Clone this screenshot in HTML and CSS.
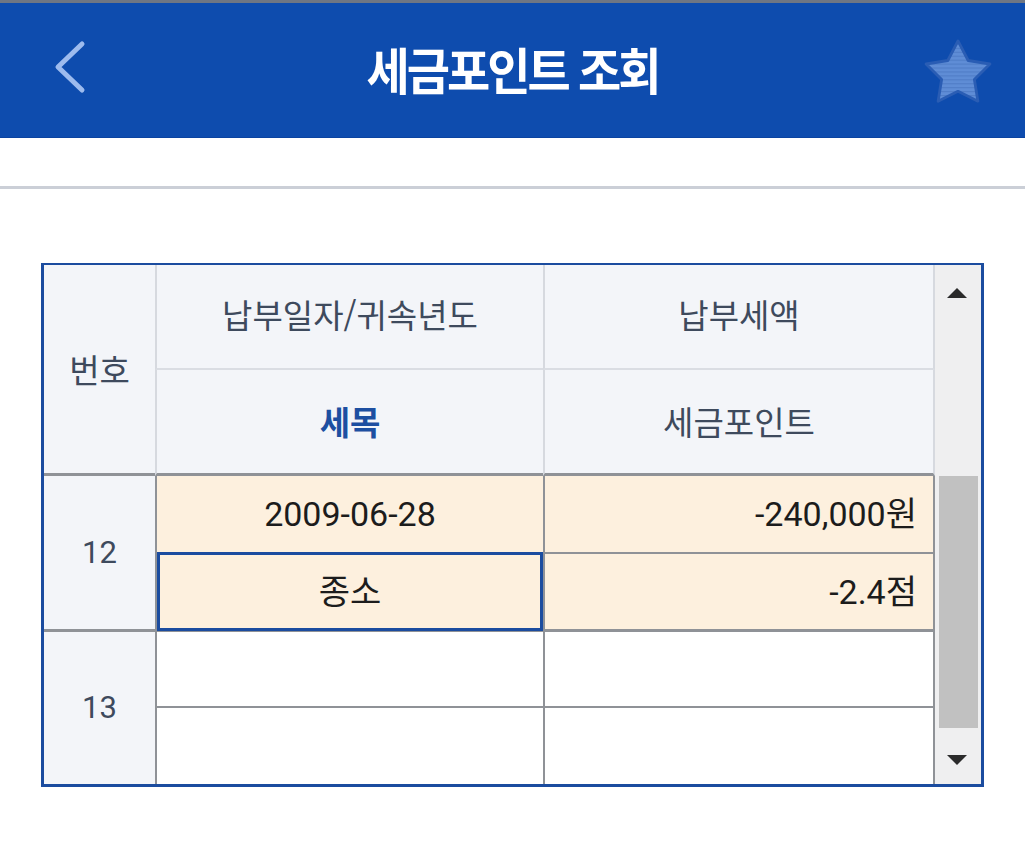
FILE: index.html
```html
<!DOCTYPE html>
<html lang="ko">
<head>
<meta charset="utf-8">
<title>세금포인트 조회</title>
<link rel="stylesheet" href="styles.css">
</head>
<body>
<div class="topstrip"></div>
<header class="appbar">
  <div class="side side-left">
    <svg class="back" width="40" height="60" viewBox="0 0 40 60" aria-label="뒤로">
      <polyline points="32,5 8,28 32,51" fill="none" stroke="#9dbbee" stroke-width="5" stroke-linecap="round" stroke-linejoin="round"/>
    </svg>
  </div>
  <h1 class="title">세금포인트 조회</h1>
  <div class="side side-right">
    <svg class="star" width="70" height="70" viewBox="0 0 64 64" aria-label="즐겨찾기">
      <defs>
        <pattern id="stripes" width="64" height="3.6" patternUnits="userSpaceOnUse">
          <rect width="64" height="3.6" fill="#5f8dd6"/>
          <rect width="64" height="1" fill="#4f7cc6"/>
        </pattern>
      </defs>
      <path d="M32 4.5 L41.3 22.4 L61.2 25.6 L47 39.8 L50.2 59.6 L32 50.6 L13.8 59.6 L17 39.8 L2.8 25.6 L22.7 22.4 Z" fill="url(#stripes)" stroke="#2a5db4" stroke-width="2.6" stroke-linejoin="round"/>
    </svg>
  </div>
</header>
<div class="subbar"></div>
<main class="content">
  <div class="table">
    <div class="grid">
      <div class="cell hd num-h">번호</div>
      <div class="cell hd h-c2 r1">납부일자/귀속년도</div>
      <div class="cell hd h-c3 r1">납부세액</div>
      <div class="cell hd h-c2 r2 strong">세목</div>
      <div class="cell hd h-c3 r2">세금포인트</div>

      <div class="scrollbar">
        <div class="sb-up"><span class="tri tri-up"></span></div>
        <div class="sb-thumb"></div>
        <div class="sb-down"><span class="tri tri-down"></span></div>
      </div>

      <div class="cell num n12">12</div>
      <div class="cell d c2 cream b2">2009-06-28</div>
      <div class="cell d c3 cream b2 right">-240,000원</div>
      <div class="cell d c2 cream b3 selected">종소</div>
      <div class="cell d c3 cream b3 right">-2.4점</div>

      <div class="cell num n13">13</div>
      <div class="cell d c2 b2"></div>
      <div class="cell d c3 b2 right"></div>
      <div class="cell d c2"></div>
      <div class="cell d c3 right"></div>
    </div>
  </div>
</main>
</body>
</html>
```

FILE: styles.css
```css
* { box-sizing: border-box; }

html, body {
  margin: 0;
  padding: 0;
  background: #ffffff;
  font-family: Roboto, "Noto Sans CJK KR", "Noto Sans", sans-serif;
}

.topstrip {
  height: 3px;
  background: #6f7683;
}

.appbar {
  height: 135px;
  background: #0e4cae;
  display: flex;
  align-items: center;
  border-bottom: 1px solid #0b43a0;
}

.side {
  width: 110px;
  display: flex;
  align-items: center;
}

.side-left { padding-left: 50px; }
.side-right { padding-left: 8px; }

.back { display: block; margin-top: -2px; }
.star { display: block; margin-top: 1px; }

.title {
  flex: 1;
  margin: 0;
  text-align: center;
  color: #ffffff;
  font-family: "Noto Sans CJK KR", sans-serif;
  font-weight: 700;
  font-size: 47px;
  letter-spacing: -3px;
  line-height: 1;
  margin-top: -4px;
  transform: scaleY(1.06);
}

.subbar {
  height: 51px;
  border-bottom: 3px solid #cbcfd7;
}

.content {
  padding: 74px 0 0 41px;
}

.table {
  width: 943px;
  border: 3px solid #1b4c9f;
  border-top-width: 2px;
}

.grid {
  display: grid;
  grid-template-columns: 111px 388px 392px 46px;
  grid-template-rows: 105px 106px 78px 78px 76px 76px;
}

.cell {
  display: flex;
  align-items: center;
  justify-content: center;
  line-height: 1;
}

.hd {
  background: #f3f5f9;
  color: #3e4a5d;
  font-family: "Noto Sans CJK KR", sans-serif;
  font-size: 33px;
}

.num-h {
  grid-column: 1;
  grid-row: 1 / 3;
  border-bottom: 3px solid #8f9297;
}

.h-c2 { grid-column: 2; border-left: 2px solid #d6d9df; }
.h-c3 { grid-column: 3; border-left: 2px solid #d6d9df; border-right: 2px solid #d6d9df; }
.r1 { grid-row: 1; border-bottom: 2px solid #dadde3; padding-bottom: 4px; }
.r2 { grid-row: 2; border-bottom: 3px solid #8f9297; }

.strong {
  color: #1d4fa1;
  font-weight: 700;
}

.num {
  grid-column: 1;
  background: #f3f5f9;
  color: #3e4a5d;
  font-size: 31px;
}

.n12 { grid-row: 3 / 5; border-bottom: 3px solid #8f9297; }
.n13 { grid-row: 5 / 7; padding-bottom: 2px; }

.d {
  color: #1c1c1c;
  font-size: 34px;
  background: #ffffff;
}

.c2 { grid-column: 2; border-left: 2px solid #8f9297; }
.c3 { grid-column: 3; border-left: 2px solid #8f9297; border-right: 2px solid #8f9297; }

.b2 { border-bottom: 2px solid #8f9297; }
.b3 { border-bottom: 3px solid #8f9297; }

.cream { background: #fdf0de; }

.right {
  justify-content: flex-end;
  padding-right: 16px;
}

.selected { position: relative; }
.selected::after {
  content: "";
  position: absolute;
  left: 0;
  right: 0;
  top: -2px;
  bottom: -2px;
  border: 3px solid #1b4c9f;
}

.scrollbar {
  grid-column: 4;
  grid-row: 1 / 7;
  background: #efeff0;
  display: flex;
  flex-direction: column;
}

.sb-up {
  height: 211px;
  display: flex;
  justify-content: center;
  padding-top: 23px;
  padding-right: 3px;
}

.sb-thumb {
  height: 252px;
  margin: 0 3px 0 4px;
  background: #c1c1c1;
}

.sb-down {
  flex: 1;
  display: flex;
  justify-content: center;
  align-items: flex-end;
  padding-bottom: 19px;
  padding-right: 3px;
}

.tri {
  width: 0;
  height: 0;
  border-left: 10px solid transparent;
  border-right: 10px solid transparent;
}

.tri-up { border-bottom: 10px solid #2b2b2b; }
.tri-down { border-top: 10px solid #2b2b2b; }
```
